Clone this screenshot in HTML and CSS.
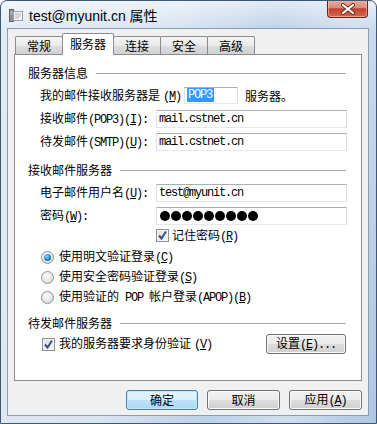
FILE: index.html
```html
<!DOCTYPE html>
<html lang="zh-CN">

<head>
    <meta charset="UTF-8">
    <meta name="viewport" content="width=device-width, initial-scale=1.0">
    <title>test@myunit.cn 属性</title>
    <link rel="stylesheet" href="styles.css">
</head>

<body>
    <div class="window">
        <div class="titlebar">
            <svg class="app-icon" width="16" height="16" viewBox="0 0 16 16">
                <rect x="1.5" y="2.5" width="4" height="12" fill="#8d9096" stroke="#5d6066" />
                <rect x="5.5" y="4.5" width="9" height="9" fill="#f4f4f4" stroke="#9a9ca0" />
                <path d="M7 7h6M7 9h6M7 11h4" stroke="#b5b7bb" />
                <path d="M2.5 5h2M2.5 7h2" stroke="#d0d2d6" />
            </svg>
            <span class="title">test@myunit.cn 属性</span>
            <div class="close-btn">
                <svg width="16" height="12" viewBox="0 0 16 12">
                    <path d="M3 2l10 8M13 2l-10 8" stroke="#6e2a22" stroke-width="4" stroke-linecap="round" />
                    <path d="M3 2l10 8M13 2l-10 8" stroke="#ffffff" stroke-width="2.2" stroke-linecap="round" />
                </svg>
            </div>
        </div>

        <div class="client">
            <div class="tabs">
                <div class="tab first">常规</div>
                <div class="tab active">服务器</div>
                <div class="tab">连接</div>
                <div class="tab">安全</div>
                <div class="tab">高级</div>
            </div>

            <div class="panel">
                <div class="group-title">服务器信息</div>
                <div class="group">
                    <div class="row">
                        <span>我的邮件接收服务器是<span class="key gap">(<u>M</u>)</span></span>
                        <div class="field small"><span class="selected">POP3</span></div>
                        <span class="after">服务器。</span>
                    </div>
                    <div class="row">
                        <span class="label">接收邮件<span class="key">(POP3)(<u>I</u>):</span></span>
                        <div class="field">mail.cstnet.cn</div>
                    </div>
                    <div class="row">
                        <span class="label">待发邮件<span class="key">(SMTP)(<u>U</u>):</span></span>
                        <div class="field">mail.cstnet.cn</div>
                    </div>
                </div>

                <div class="group-title second">接收邮件服务器</div>
                <div class="group">
                    <div class="row">
                        <span class="label">电子邮件用户名<span class="key">(<u>U</u>):</span></span>
                        <div class="field">test@myunit.cn</div>
                    </div>
                    <div class="row">
                        <span class="label">密码<span class="key">(<u>W</u>):</span></span>
                        <div class="field password">
                            <i></i><i></i><i></i><i></i><i></i><i></i><i></i><i></i><i></i>
                        </div>
                    </div>
                    <div class="check-row remember">
                        <span class="checkbox checked"></span>
                        <span>记住密码<span class="key">(<u>R</u>)</span></span>
                    </div>
                    <div class="radio-row first-radio">
                        <span class="radio on"></span>
                        <span>使用明文验证登录<span class="key">(<u>C</u>)</span></span>
                    </div>
                    <div class="radio-row">
                        <span class="radio"></span>
                        <span>使用安全密码验证登录<span class="key">(<u>S</u>)</span></span>
                    </div>
                    <div class="radio-row">
                        <span class="radio"></span>
                        <span>使用验证的<span class="key"> POP </span>帐户登录<span class="key">(APOP)(<u>B</u>)</span></span>
                    </div>
                </div>

                <div class="group-title third">待发邮件服务器</div>
                <div class="group">
                    <div class="check-row auth">
                        <span class="checkbox checked"></span>
                        <span>我的服务器要求身份验证<span class="key gap">(<u>V</u>)</span></span>
                        <button class="btn settings">设置<span class="key">(<u>E</u>)...</span></button>
                    </div>
                </div>
            </div>

            <div class="buttons">
                <button class="btn default">确定</button>
                <button class="btn">取消</button>
                <button class="btn">应用<span class="key">(<u>A</u>)</span></button>
            </div>
        </div>
    </div>
</body>

</html>
```

FILE: styles.css
```css
body {
    margin: 0;
    background: #ffffff;
    font-family: "Noto Sans CJK SC", sans-serif;
    font-size: 12px;
    color: #000;
}

.window {
    width: 377px;
    height: 424px;
    box-sizing: border-box;
    border: 1px solid #3f5774;
    border-radius: 7px 7px 0 0;
    padding: 0 7px 7px 6px;
    background:
        linear-gradient(180deg, rgba(255, 255, 255, 0.55), rgba(255, 255, 255, 0) 30px),
        linear-gradient(100deg, #e2ebf6 0%, #d6e3f1 40%, #bcd1e8 62%, #cfdeef 80%, #aec7e1 100%);
    overflow: hidden;
}

/* title bar */
.titlebar {
    height: 27px;
    display: flex;
    align-items: center;
}

.app-icon {
    margin-left: 1px;
    flex-shrink: 0;
}

.title {
    margin-left: 5px;
    font-family: "Liberation Sans", "Noto Sans CJK SC", sans-serif;
    font-size: 14px;
    color: #000;
}

.close-btn {
    margin-left: auto;
    margin-right: 1px;
    align-self: flex-start;
    margin-top: -1px;
    width: 41px;
    height: 18px;
    box-sizing: border-box;
    border: 1px solid #6b2219;
    border-top: none;
    border-radius: 0 0 4px 4px;
    background: linear-gradient(#eab0a0 0%, #dc8a7a 45%, #c2402f 52%, #cf6a50 100%);
    box-shadow: inset 0 0 0 1px rgba(255, 220, 210, 0.5);
    display: flex;
    align-items: center;
    justify-content: center;
}

/* client area */
.client {
    height: 388px;
    box-sizing: border-box;
    border: 1px solid #8b9db4;
    background: #f0f0f0;
}

.tabs {
    display: flex;
    align-items: flex-end;
    height: 21px;
    margin-top: 4px;
    padding-left: 7px;
}

.tab {
    width: 48px;
    height: 18px;
    box-sizing: border-box;
    margin-right: -1px;
    border: 1px solid #898c95;
    border-bottom: none;
    border-radius: 2px 2px 0 0;
    background: linear-gradient(#f4f4f4 0%, #ebebeb 50%, #dddddd 51%, #d2d2d2 100%);
    text-align: center;
    line-height: 17px;
}

.tab.active {
    position: relative;
    z-index: 1;
    width: 52px;
    height: 22px;
    margin-bottom: -1px;
    background: #ffffff;
    line-height: 19px;
}

.panel {
    margin: 0 6px;
    height: 327px;
    box-sizing: border-box;
    border: 1px solid #898c95;
    background: #ffffff;
    padding: 10px 14px 0 13px;
}

.group-title {
    display: flex;
    align-items: center;
    height: 16px;
    line-height: 16px;
}

.group-title::after {
    content: "";
    flex: 1;
    height: 1px;
    margin: 0 1px 0 8px;
    background: #a8a8a8;
}

.group-title.second {
    margin-top: 9px;
}

.group-title.third {
    margin-top: 8px;
}

.group {
    padding-left: 12px;
    margin-top: 3px;
}

.row {
    display: flex;
    align-items: center;
    height: 23px;
    line-height: 16px;
}

.label {
    width: 116px;
    flex-shrink: 0;
}

.key {
    font-family: "Liberation Mono", monospace;
    font-size: 12px;
    letter-spacing: -1.2px;
}

.key.gap {
    margin-left: 3px;
}

.field {
    flex: 1;
    height: 18px;
    box-sizing: border-box;
    border: 1px solid #abadb3;
    border-color: #abadb3 #dbdfe6 #e3e9ef #e2e3ea;
    background: #fff;
    padding-left: 2px;
    font-family: "Liberation Mono", monospace;
    font-size: 12px;
    letter-spacing: -1.2px;
    line-height: 16px;
}

.field.small {
    flex: none;
    width: 54px;
    height: 17px;
    margin-left: 3px;
    line-height: 15px;
}

.selected {
    background: #3399ff;
    color: #fff;
    padding: 0 2px 0 1px;
}

.after {
    margin-left: 7px;
}

.field.password {
    display: flex;
    align-items: center;
    gap: 1px;
    padding-left: 3px;
}

.field.password i {
    width: 10px;
    height: 10px;
    border-radius: 50%;
    background: #000;
}

.check-row,
.radio-row {
    display: flex;
    align-items: center;
    line-height: 16px;
}

.check-row.remember {
    height: 17px;
    padding-left: 116px;
}

.check-row.auth {
    height: 20px;
    padding-left: 2px;
}

.radio-row {
    height: 20px;
    padding-left: 1px;
}

.radio-row.first-radio {
    margin-top: 3px;
}

.checkbox {
    width: 13px;
    height: 13px;
    box-sizing: border-box;
    flex-shrink: 0;
    margin-right: 3px;
    border: 1px solid #8f8f8f;
    background: linear-gradient(135deg, #dcdcdc, #f8f8f8);
    box-shadow: inset 0 0 0 1px #f4f4f4;
}

.check-row.auth .checkbox {
    margin-right: 4px;
}

.checkbox.checked {
    background:
        url("data:image/svg+xml;utf8,<svg xmlns='http://www.w3.org/2000/svg' width='11' height='11'><path d='M2 5.5l2.5 3 4.5-7' fill='none' stroke='%233b4f8c' stroke-width='2'/></svg>") center / 11px 11px no-repeat,
        linear-gradient(135deg, #dcdcdc, #f8f8f8);
}

.radio {
    width: 13px;
    height: 13px;
    box-sizing: border-box;
    flex-shrink: 0;
    margin-right: 5px;
    border-radius: 50%;
    border: 1px solid #8e8f8f;
    background: radial-gradient(circle at 40% 35%, #ffffff 0%, #e8e8e8 50%, #cfcfcf 100%);
    display: flex;
    align-items: center;
    justify-content: center;
}

.radio.on::after {
    content: "";
    width: 7px;
    height: 7px;
    border-radius: 50%;
    background: radial-gradient(circle at 40% 35%, #8fe0ff 0%, #2a91c7 45%, #174f78 100%);
}

.btn {
    height: 20px;
    box-sizing: border-box;
    border: 1px solid #707070;
    border-radius: 3px;
    background: linear-gradient(#f2f2f2 0%, #ebebeb 50%, #dddddd 51%, #cfcfcf 100%);
    box-shadow: inset 0 0 0 1px #fbfbfb;
    font-family: "Noto Sans CJK SC", sans-serif;
    font-size: 12px;
    color: #000;
    padding: 0;
    line-height: 16px;
}

.btn.settings {
    margin-left: auto;
    margin-right: 1px;
    width: 80px;
}

.btn.default {
    border-color: #3c7fb1;
    background: linear-gradient(#e5f4fc 0%, #d6eefb 50%, #bde3f8 51%, #a9d8f2 100%);
    box-shadow: inset 0 0 0 1px #c4e7f8;
}

.buttons {
    display: flex;
    justify-content: flex-end;
    gap: 9px;
    margin: 9px 6px 0 0;
}

.buttons .btn {
    width: 73px;
}

.buttons .btn.default {
    width: 72px;
}
```
